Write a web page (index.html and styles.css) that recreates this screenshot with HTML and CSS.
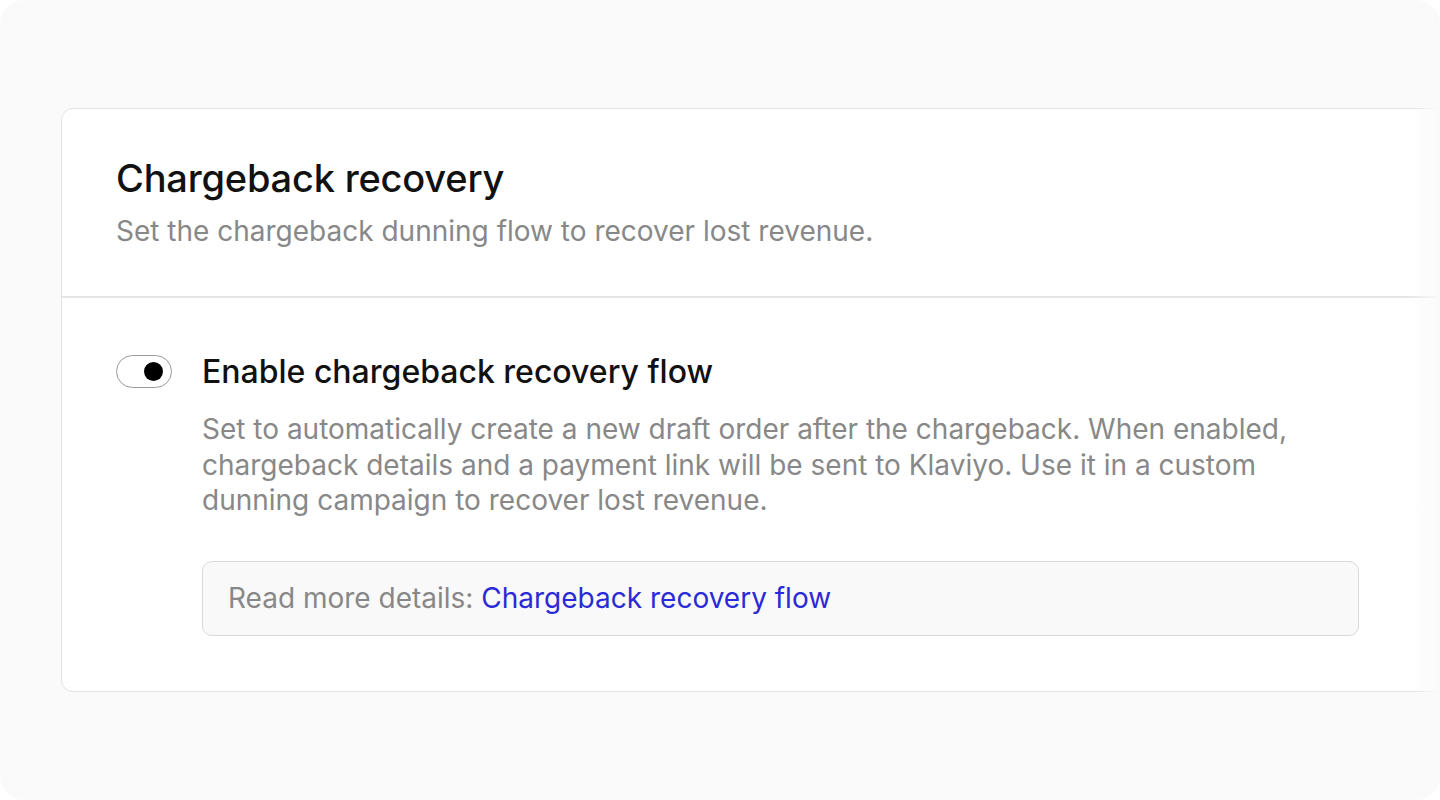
FILE: index.html
```html
<!DOCTYPE html>
<html lang="en">
<head>
    <meta charset="UTF-8">
    <meta name="viewport" content="width=device-width, initial-scale=1.0">
    <title>Chargeback recovery</title>
    <link rel="stylesheet" href="styles.css">
</head>
<body>

    <div class="frame">
        <div class="card">

            <!-- Card header -->
            <div class="card-header">
                <h1>Chargeback recovery</h1>
                <p>Set the chargeback dunning flow to recover lost revenue.</p>
            </div>

            <!-- Setting row -->
            <div class="card-body">
                <div class="setting">
                    <button class="toggle is-on" aria-label="Enable chargeback recovery flow"><span class="knob"></span></button>
                    <div class="setting-text">
                        <h2>Enable chargeback recovery flow</h2>
                        <p>Set to automatically create a new draft order after the chargeback. When enabled, chargeback details and a payment link will be sent to Klaviyo. Use it in a custom dunning campaign to recover lost revenue.</p>
                        <div class="info-box">
                            Read more details: <a href="#">Chargeback recovery flow</a>
                        </div>
                    </div>
                </div>
            </div>

        </div>
        <div class="fade"></div>
    </div>

</body>
</html>
```

FILE: styles.css
```css
body {
    font-family: 'Inter', 'Noto Sans', sans-serif;
    margin: 0;
    background-color: #fff;
    color: #111;
}

.frame {
    position: relative;
    width: 1440px;
    height: 800px;
    box-sizing: border-box;
    padding: 108px 0 0 61px;
    background-color: #fafafa;
    border-radius: 24px;
    overflow: hidden;
}

.card {
    width: 1420px;
    background-color: #fff;
    border: 1px solid #e2e2e2;
    border-radius: 12px;
}

.card-header {
    padding: 46px 54px 47px;
    border-bottom: 2px solid #e6e6e6;
}

.card-header h1 {
    margin: 0;
    font-size: 38px;
    line-height: 46px;
    font-weight: 500;
    letter-spacing: -0.2px;
}

.card-header p {
    margin: 12px 0 0;
    font-size: 28px;
    line-height: 36px;
    color: #888;
}

.card-body {
    padding: 54px 54px 55px;
}

.setting {
    display: flex;
    gap: 30px;
}

.toggle {
    flex-shrink: 0;
    width: 56px;
    height: 33px;
    margin-top: 3px;
    padding: 0 8px;
    display: flex;
    align-items: center;
    justify-content: flex-end;
    border: 1px solid #9a9a9a;
    border-radius: 17px;
    background-color: #fff;
    cursor: pointer;
}

.knob {
    width: 19px;
    height: 19px;
    border-radius: 50%;
    background-color: #000;
}

.setting-text {
    width: 1157px;
}

.setting-text h2 {
    margin: 0;
    font-size: 32px;
    line-height: 40px;
    font-weight: 500;
}

.setting-text p {
    margin: 20px 0 0;
    font-size: 28px;
    line-height: 35.5px;
    color: #888;
}

.info-box {
    margin-top: 42px;
    padding: 19px 25px;
    font-size: 28px;
    line-height: 35px;
    color: #888;
    background-color: #f9f9f9;
    border: 1px solid #d9d9d9;
    border-radius: 10px;
}

.info-box a {
    color: #2a2ad6;
    text-decoration: none;
}

.fade {
    position: absolute;
    top: 0;
    right: 0;
    width: 30px;
    height: 100%;
    background: linear-gradient(to right, rgba(250, 250, 250, 0), #fafafa);
}
```
